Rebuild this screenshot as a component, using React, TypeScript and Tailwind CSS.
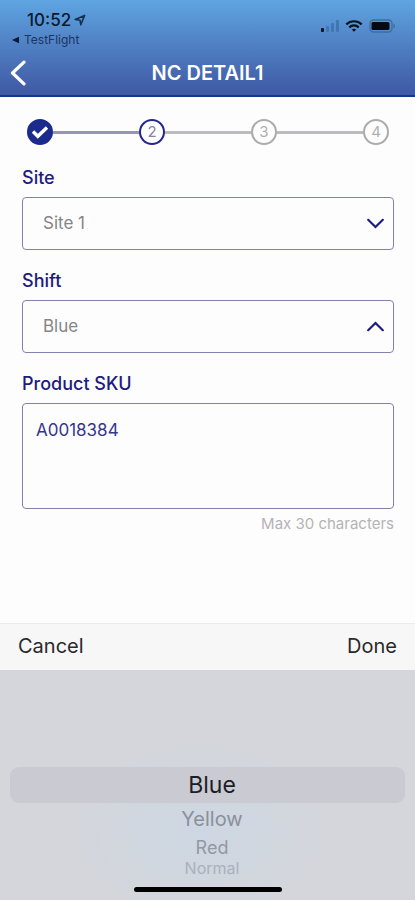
import { useState, type ReactNode } from "react";

const shifts = [
  { name: "Blue", row: "h-9 text-[23px] text-[#1c1e26]" },
  { name: "Yellow", row: "h-8 text-[20px] text-[#8b909b]" },
  { name: "Red", row: "h-6 text-[18px] text-[#9498a3]" },
  { name: "Normal", row: "h-[18px] text-[16px] text-[#abb0bb]" },
];

function StatusBar() {
  return (
    <div className="flex h-12 items-start justify-between pl-[11px] pr-[19px] pt-[10px] text-[#0a1a30]">
      <div>
        <div className="flex items-center gap-[3px] pl-4 text-[17px] font-medium leading-5">
          10:52
          <svg width="12" height="12" viewBox="0 0 12 12" fill="none" stroke="#16304f" strokeWidth="1.6" strokeLinejoin="round" aria-hidden="true">
            <path d="M1.2 5.4 10.6 1.4 6.8 10.8 6 6.2Z" />
          </svg>
        </div>
        <button type="button" className="flex items-center gap-1 text-[12px] leading-5 text-[#1b3562]">
          <svg width="9" height="8" viewBox="0 0 9 8" fill="#0a1a30" aria-hidden="true">
            <path d="M1 4 8 .8v6.4Z" />
          </svg>
          TestFlight
        </button>
      </div>
      <div className="flex items-center gap-[6px] pt-[9px]" aria-hidden="true">
        <svg width="19" height="14" viewBox="0 0 19 14">
          <rect x="1" y="9" width="3" height="4" rx="1" fill="#07121f" />
          <g fill="#3f78b0">
            <rect x="6" y="7" width="3" height="6" rx="1" />
            <rect x="11" y="4" width="3" height="9" rx="1" />
            <rect x="16" y="1" width="3" height="12" rx="1" />
          </g>
        </svg>
        <svg width="18" height="14" viewBox="0 0 18 14" fill="none" stroke="#07121f" strokeWidth="2.2">
          <path d="M1.3 5.4a11 11 0 0 1 15.4 0" />
          <path d="M4.3 8.4a6.7 6.7 0 0 1 9.4 0" />
          <path d="M9 12.8 6.9 10.7a3 3 0 0 1 4.2 0Z" fill="#07121f" stroke="none" />
        </svg>
        <svg width="27" height="14" viewBox="0 0 27 14">
          <rect x="1" y="1" width="22" height="12" rx="3.5" fill="none" stroke="#3d6f9f" strokeWidth="1.4" />
          <rect x="2.5" y="3" width="18" height="8" rx="1.5" fill="#050a10" />
          <path d="M24.5 4.6c2 .8 2 4 0 4.8Z" fill="#3d6f9f" />
        </svg>
      </div>
    </div>
  );
}

function Step({ children, tone }: { children: ReactNode; tone: string }) {
  return (
    <li className={`flex size-[26px] shrink-0 items-center justify-center rounded-full border-2 text-[15px] ${tone}`}>
      {children}
    </li>
  );
}

function Stepper() {
  return (
    <ol className="flex items-center px-[5px]">
      <Step tone="border-[#1a2b8c] bg-[#1a2b8c]">
        <svg width="18" height="16" viewBox="0 0 18 16" fill="none" stroke="#fff" strokeWidth="3.4" role="img" aria-label="Completed">
          <path d="m2 7.5 4.8 4.8L16 3.5" />
        </svg>
      </Step>
      <li className="h-[3px] flex-1 bg-[#9595b8]" aria-hidden="true" />
      <Step tone="border-[#25258a] text-[#85859c]">2</Step>
      <li className="h-[3px] flex-1 bg-[#bcbcbf]" aria-hidden="true" />
      <Step tone="border-[#acacac] text-[#b0b0b0]">3</Step>
      <li className="h-[3px] flex-1 bg-[#bcbcbf]" aria-hidden="true" />
      <Step tone="border-[#acacac] text-[#b0b0b0]">4</Step>
    </ol>
  );
}

type SelectFieldProps = {
  id: string;
  label: string;
  options: string[];
  value: string;
  open?: boolean;
  onChange: (value: string) => void;
};

function SelectField({ id, label, options, value, open = false, onChange }: SelectFieldProps) {
  return (
    <div>
      <label htmlFor={id} className="mb-[7px] block text-[18px] font-medium leading-6 text-[#1e1b80]">
        {label}
      </label>
      <div className="relative">
        <select
          id={id}
          value={value}
          onChange={(e) => onChange(e.target.value)}
          className="block h-[53px] w-full appearance-none rounded-[4px] border border-[#8382ac] bg-transparent px-5 text-[17px] text-[#858585] outline-none"
        >
          {options.map((o) => (
            <option key={o}>{o}</option>
          ))}
        </select>
        <svg
          className="pointer-events-none absolute inset-y-0 right-[10px] my-auto"
          width="17"
          height="11"
          viewBox="0 0 17 11"
          fill="none"
          stroke="#1e1b80"
          strokeWidth="2.2"
          strokeLinecap="round"
          aria-hidden="true"
        >
          <path d={open ? "M1.2 9.2 8.5 2l7.3 7.2" : "M1.2 1.8 8.5 9l7.3-7.2"} />
        </svg>
      </div>
    </div>
  );
}

export default function App() {
  const [site, setSite] = useState("Site 1");
  const [shift, setShift] = useState("Blue");
  const [sku, setSku] = useState("A0018384");

  return (
    <div className="flex min-h-screen flex-col bg-[#fdfdfe] font-['Inter','Liberation_Sans',sans-serif]">
      <header className="border-b-2 border-[#16368c] bg-linear-to-b from-[#5fa5e1] to-[#3f58a4]">
        <StatusBar />
        <div className="grid h-[47px] grid-cols-[48px_1fr_48px] items-center pb-[1px] pt-[4px]">
          <button type="button" aria-label="Back" className="pl-[10px]">
            <svg width="17" height="26" viewBox="0 0 17 26" fill="none" stroke="#fff" strokeWidth="3.2" strokeLinecap="round" strokeLinejoin="round">
              <path d="M14 2.2 2.5 13 14 23.8" />
            </svg>
          </button>
          <h1 className="text-center text-[20px] font-semibold text-white">NC DETAIL1</h1>
        </div>
      </header>

      <main className="flex flex-1 flex-col pb-6 pl-[22px] pr-[21px] pt-[22px]">
        <Stepper />
        <form className="mt-[21px] flex flex-col gap-[19px]">
          <SelectField id="site" label="Site" options={["Site 1"]} value={site} onChange={setSite} />
          <SelectField id="shift" label="Shift" options={shifts.map((s) => s.name)} value={shift} open onChange={setShift} />
          <div>
            <label htmlFor="sku" className="mb-[7px] block text-[18px] font-medium leading-6 text-[#1e1b80]">
              Product SKU
            </label>
            <textarea
              id="sku"
              maxLength={30}
              value={sku}
              onChange={(e) => setSku(e.target.value)}
              aria-describedby="sku-hint"
              className="block h-[106px] w-full resize-none rounded-[4px] border border-[#8382ac] bg-transparent px-[13px] py-[14px] text-[17px] leading-6 text-[#35358c] outline-none"
            />
            <p id="sku-hint" className="mt-[5px] text-right text-[15px] leading-5 text-[#b4b4b6]">
              Max 30 characters
            </p>
          </div>
        </form>
      </main>

      <section aria-label="Shift picker">
        <div className="flex h-[47px] items-center justify-between border-t border-[#ebebec] bg-[#f7f7f7] px-[18px] pb-[2px] text-[20px] text-[#29292b]">
          <button type="button">Cancel</button>
          <button type="button">Done</button>
        </div>
        <div className="bg-[#d4d6db] bg-[radial-gradient(ellipse_130px_90px_at_48%_70%,#cdd7e3,#d4d6db)] pb-2 pt-[97px]">
          <fieldset className="px-[10px]" aria-label="Shift">
            {shifts.map((s) => (
              <label
                key={s.name}
                className={`flex items-center justify-center rounded-[9px] pl-[9px] has-checked:bg-[#c9cad2] ${s.row}`}
              >
                <input
                  type="radio"
                  name="shift-picker"
                  className="sr-only"
                  checked={shift === s.name}
                  onChange={() => setShift(s.name)}
                />
                {s.name}
              </label>
            ))}
          </fieldset>
          <div className="mx-auto mt-[10px] h-[5px] w-[148px] rounded-full bg-black" />
        </div>
      </section>
    </div>
  );
}
